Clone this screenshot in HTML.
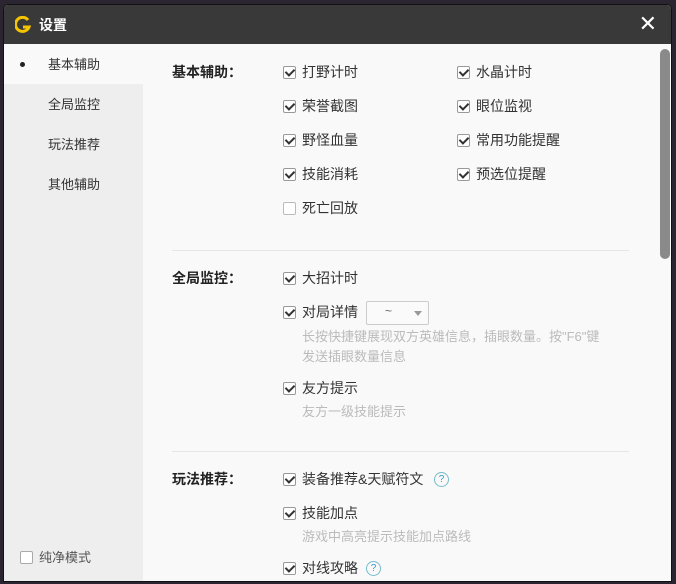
<!DOCTYPE html>
<html><head><meta charset="utf-8"><style>
*{margin:0;padding:0;box-sizing:border-box}
body{width:676px;height:584px;overflow:hidden;background:#2a2530;font-family:"Liberation Sans","Noto Sans CJK SC",sans-serif;position:relative}
.win{position:absolute;left:3px;top:4px;width:669px;height:578px;background:#f9f9f9;border:1px solid #111;border-radius:5px 5px 0 0;overflow:hidden}
.tb{position:absolute;left:0;top:0;width:100%;height:39px;background:#393939}
.tb .t{position:absolute;left:35px;top:10px;color:#fff;font-size:14px;font-weight:bold}
.tb .x{position:absolute;right:14px;top:6px;color:#fff;font-size:22px}
.side{position:absolute;left:0;top:39px;width:139px;bottom:0;background:#eeeeee}
.side .sel{position:absolute;left:0;top:0;width:139px;height:40px;background:#f9f9f9}
.abs{position:absolute;white-space:nowrap}
.si,.it,.lab,.hint{margin-top:-2px}
.si{font-size:13px;color:#333}
.cb{position:absolute;width:13px;height:13px;border:1px solid #999;background:#fff;border-radius:2px}
.cb.on::after{content:"";position:absolute;left:3px;top:0px;width:4px;height:7px;border:solid #333;border-width:0 2px 2px 0;transform:rotate(45deg)}
.it{font-size:14px;color:#333}
.lab{font-size:14px;color:#222;font-weight:bold}
.hint{font-size:13px;color:#bbb}
.hr{position:absolute;left:168px;width:457px;height:1px;background:#e6e6e6}
.q{position:absolute;width:15px;height:15px;border:1px solid #7bc;border-radius:50%;color:#39c;font-size:10px;text-align:center;line-height:13px}
</style></head><body>
<div class="win">
<div class="tb">
<svg style="position:absolute;left:11px;top:11px" width="16" height="18" viewBox="0 0 16 18"><path d="M13 4A7 7 0 1 0 14 11H8" fill="none" stroke="#f5c400" stroke-width="3"/></svg>
<div class="t">设置</div><div class="x">✕</div></div>
<div class="side"><div class="sel"></div></div>
<div class="abs" style="left:16px;top:57px;width:5px;height:5px;border-radius:50%;background:#222"></div>
<div class="abs si" style="left:44px;top:51px">基本辅助</div>
<div class="abs si" style="left:44px;top:91px">全局监控</div>
<div class="abs si" style="left:44px;top:131px">玩法推荐</div>
<div class="abs si" style="left:44px;top:171px">其他辅助</div>
<div class="cb" style="left:16px;top:546px;border-color:#aaa"></div>
<div class="abs si" style="left:35px;top:544px;color:#555">纯净模式</div>

<div class="abs" style="left:656px;top:44px;width:10px;height:210px;background:#8a8a8a;border-radius:5px"></div>

<div class="abs lab" style="left:168px;top:59px">基本辅助：</div>
<div class="cb on" style="left:279px;top:61px"></div><div class="abs it" style="left:298px;top:59px">打野计时</div>
<div class="cb on" style="left:453px;top:61px"></div><div class="abs it" style="left:472px;top:59px">水晶计时</div>
<div class="cb on" style="left:279px;top:95px"></div><div class="abs it" style="left:298px;top:93px">荣誉截图</div>
<div class="cb on" style="left:453px;top:95px"></div><div class="abs it" style="left:472px;top:93px">眼位监视</div>
<div class="cb on" style="left:279px;top:129px"></div><div class="abs it" style="left:298px;top:127px">野怪血量</div>
<div class="cb on" style="left:453px;top:129px"></div><div class="abs it" style="left:472px;top:127px">常用功能提醒</div>
<div class="cb on" style="left:279px;top:163px"></div><div class="abs it" style="left:298px;top:161px">技能消耗</div>
<div class="cb on" style="left:453px;top:163px"></div><div class="abs it" style="left:472px;top:161px">预选位提醒</div>
<div class="cb" style="left:279px;top:197px;border-color:#bbb"></div><div class="abs it" style="left:298px;top:195px">死亡回放</div>
<div class="hr" style="top:245px"></div>

<div class="abs lab" style="left:168px;top:265px">全局监控：</div>
<div class="cb on" style="left:279px;top:267px"></div><div class="abs it" style="left:298px;top:265px">大招计时</div>
<div class="cb on" style="left:279px;top:301px"></div><div class="abs it" style="left:298px;top:299px">对局详情</div>
<div class="abs" style="left:362px;top:296px;width:63px;height:24px;border:1px solid #ccc;background:#fafafa;border-radius:2px"><span style="position:absolute;left:18px;top:2px;font-size:12px;color:#666">~</span><span style="position:absolute;left:47px;top:9px;border:4px solid transparent;border-top:5px solid #999"></span></div>
<div class="abs hint" style="left:298px;top:323px">长按快捷键展现双方英雄信息，插眼数量。按"F6"键</div>
<div class="abs hint" style="left:298px;top:343px">发送插眼数量信息</div>
<div class="cb on" style="left:279px;top:377px"></div><div class="abs it" style="left:298px;top:375px">友方提示</div>
<div class="abs hint" style="left:298px;top:398px">友方一级技能提示</div>
<div class="hr" style="top:446px"></div>

<div class="abs lab" style="left:168px;top:466px">玩法推荐：</div>
<div class="cb on" style="left:279px;top:468px"></div><div class="abs it" style="left:298px;top:466px">装备推荐&amp;天赋符文</div>
<div class="q" style="left:430px;top:467px">?</div>
<div class="cb on" style="left:279px;top:502px"></div><div class="abs it" style="left:298px;top:500px">技能加点</div>
<div class="abs hint" style="left:298px;top:523px">游戏中高亮提示技能加点路线</div>
<div class="cb on" style="left:279px;top:557px"></div><div class="abs it" style="left:298px;top:555px">对线攻略</div>
<div class="q" style="left:362px;top:556px">?</div>
</div>
</body></html>
